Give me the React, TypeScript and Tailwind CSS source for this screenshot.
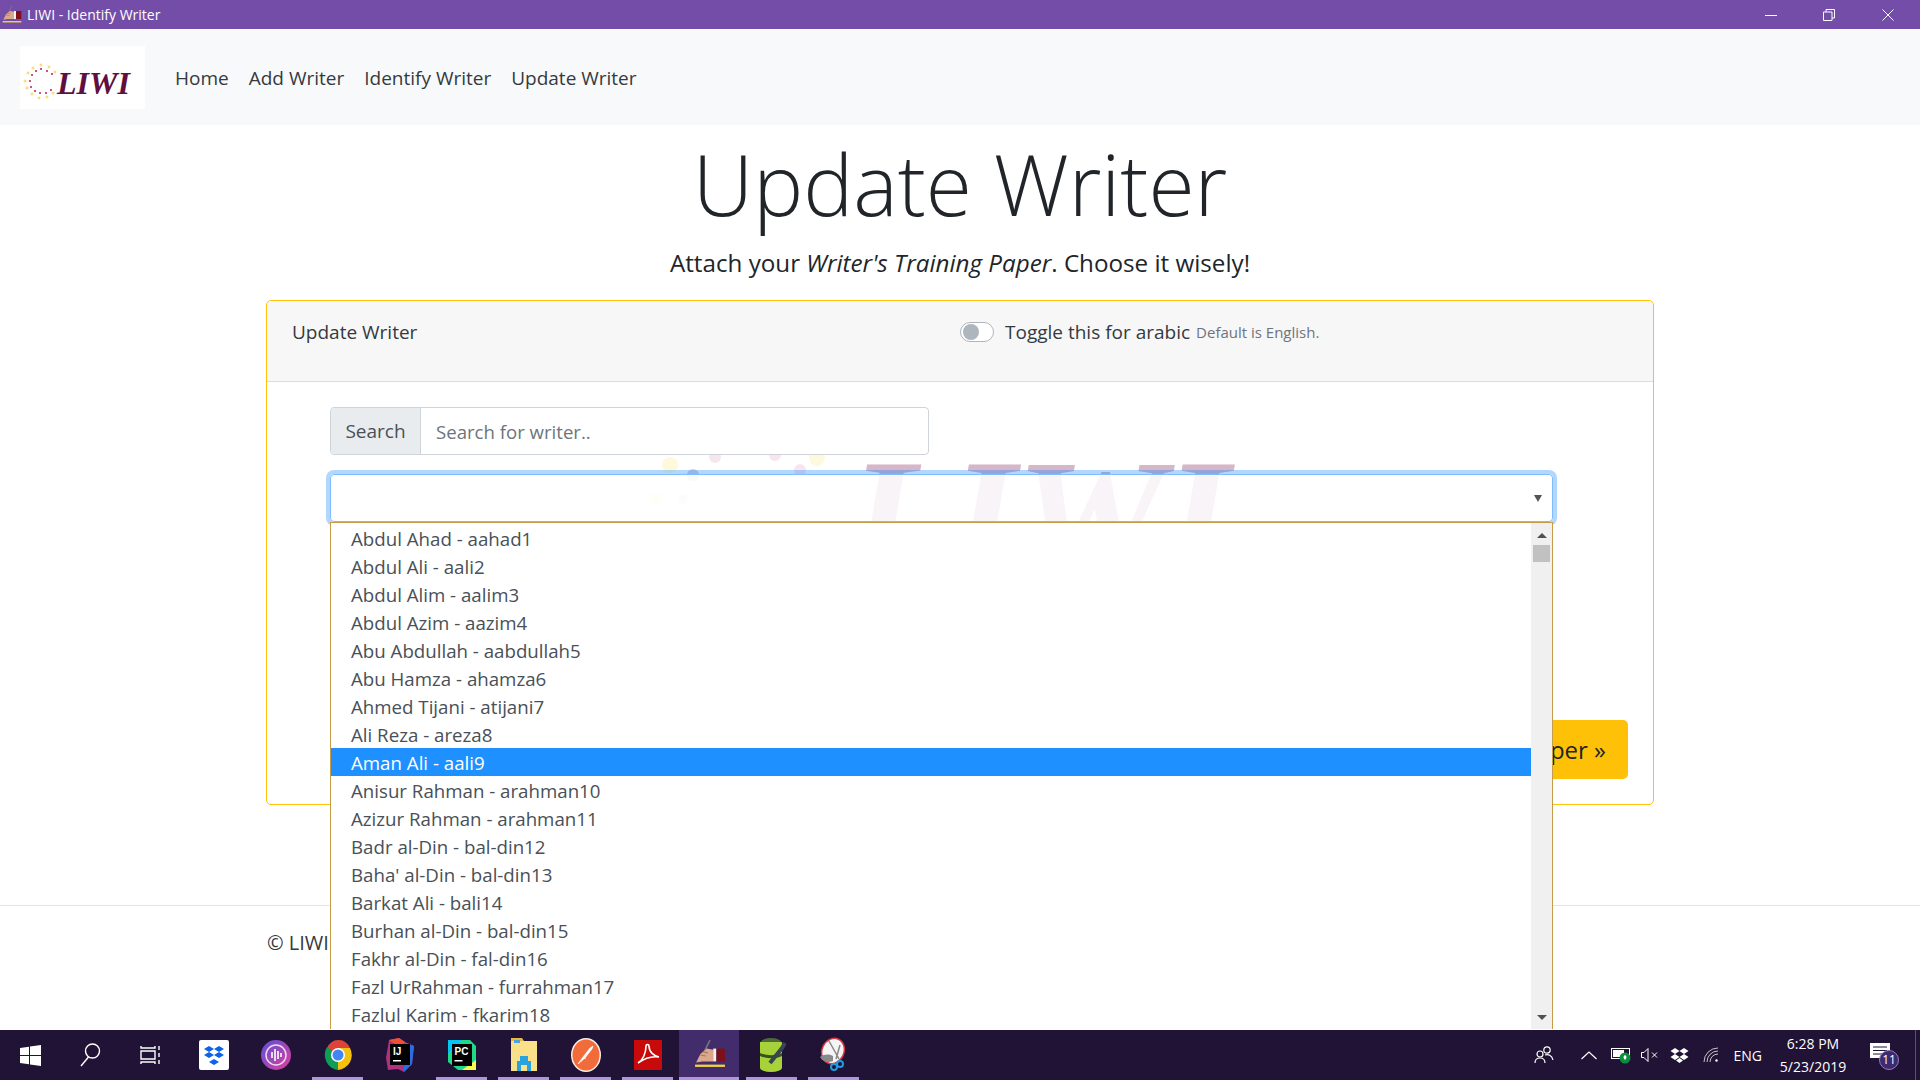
import React from 'react';

const writers = [
  'Abdul Ahad - aahad1',
  'Abdul Ali - aali2',
  'Abdul Alim - aalim3',
  'Abdul Azim - aazim4',
  'Abu Abdullah - aabdullah5',
  'Abu Hamza - ahamza6',
  'Ahmed Tijani - atijani7',
  'Ali Reza - areza8',
  'Aman Ali - aali9',
  'Anisur Rahman - arahman10',
  'Azizur Rahman - arahman11',
  'Badr al-Din - bal-din12',
  "Baha' al-Din - bal-din13",
  'Barkat Ali - bali14',
  'Burhan al-Din - bal-din15',
  'Fakhr al-Din - fal-din16',
  'Fazl UrRahman - furrahman17',
  'Fazlul Karim - fkarim18',
];

const yellowDots = [
  [13, 22], [21, 19], [29, 21], [35, 26], [8, 27], [5, 35], [7, 42], [12, 48], [19, 52], [27, 51], [33, 47],
];
const pinkDots = [
  [16, 25], [21, 23], [27, 25], [32, 28], [12, 29], [10, 35], [11, 41], [15, 45], [20, 47], [26, 47], [31, 44],
];

function Logo() {
  return (
    <svg width="125" height="63" viewBox="0 0 125 63" className="bg-white">
      {yellowDots.map(([x, y], i) => (
        <rect key={i} x={x - 1.3} y={y - 1.3} width="2.6" height="2.6" fill="#fbdc7c" />
      ))}
      {pinkDots.map(([x, y], i) => (
        <rect key={i} x={x - 1} y={y - 1} width="2" height="2" fill="#c9567f" />
      ))}
      <text
        x="37"
        y="48"
        textLength="73"
        lengthAdjust="spacingAndGlyphs"
        fontFamily="Liberation Serif, serif"
        fontStyle="italic"
        fontWeight="700"
        fontSize="31"
        fill="#5f0f40"
      >
        LIWI
      </text>
    </svg>
  );
}

function Watermark() {
  const dots = [
    [670, 465, 8, '#fef9dc'],
    [715, 457, 6, '#f7e6ef'],
    [775, 455, 6, '#f7e6ef'],
    [817, 458, 8, '#fef9dc'],
    [693, 475, 6, '#d9cfe6'],
    [800, 470, 6, '#f7e6ef'],
    [656, 498, 7, '#fdf9d8'],
    [683, 499, 5, '#f3e4ec'],
  ] as const;
  return (
    <svg width="640" height="210" viewBox="640 415 640 210" className="absolute left-[373px] top-[33px]">
      {dots.map(([x, y, r, c], i) => (
        <circle key={i} cx={x} cy={y} r={r} fill={c} />
      ))}
      <text
        x="849"
        y="577"
        textLength="381"
        lengthAdjust="spacingAndGlyphs"
        fontFamily="Liberation Serif, serif"
        fontStyle="italic"
        fontWeight="700"
        fontSize="172"
        fill="#d6b7c9"
      >
        LIWI
      </text>
    </svg>
  );
}

function AppIcon({ size }: { size: number }) {
  return (
    <svg width={size} height={size} viewBox="0 0 30 30">
      <path d="M15 1l-5 10" stroke="#777" strokeWidth="1.5" />
      <path d="M2 22l4-8 6-5 6 1v11H8z" fill="#dca88c" />
      <path d="M6 15l5 1M8 12l5 1" stroke="#a8755c" strokeWidth="1" />
      <rect x="18" y="9" width="3" height="12" fill="#f4f4f4" />
      <rect x="21" y="9" width="8" height="12" fill="#7d1019" />
      <rect x="1" y="24" width="28" height="2.2" fill="#f0cf45" />
    </svg>
  );
}

function TitleBar() {
  return (
    <div className="flex h-[29px] shrink-0 items-center bg-[#744da9] text-white">
      <div className="ml-[2px] mr-[5px]">
        <AppIcon size={20} />
      </div>
      <span className="text-[14px] leading-none">LIWI - Identify Writer</span>
      <div className="ml-auto flex items-center">
        <svg width="12" height="12" viewBox="0 0 12 12" className="mr-[46px]">
          <path d="M0 6.5h12" stroke="#fff" strokeWidth="1" />
        </svg>
        <svg width="12" height="12" viewBox="0 0 12 12" className="mr-[47px]">
          <path d="M.5 3h8.500v8.500H.5zM3 3V.5h8.500V9H9" fill="none" stroke="#fff" strokeWidth="1" />
        </svg>
        <svg width="12" height="12" viewBox="0 0 12 12" className="mr-[26px]">
          <path d="M.5.5l11 11M11.500.5l-11 11" stroke="#fff" strokeWidth="1" />
        </svg>
      </div>
    </div>
  );
}

function Navbar() {
  return (
    <nav className="flex h-[96px] shrink-0 items-center bg-[#f8f9fa] pl-[20px]">
      <Logo />
      <ul className="ml-[30px] flex gap-[20px] pt-[3px] text-[19px] text-[#343a40]">
        <li>Home</li>
        <li>Add Writer</li>
        <li>Identify Writer</li>
        <li>Update Writer</li>
      </ul>
    </nav>
  );
}

function WriterDropdown() {
  return (
    <div className="absolute left-0 top-full z-20 flex h-[507px] w-full border-x border-t border-[#c69c48] bg-white">
      <ul className="flex-1 pt-[1px] text-[18.7px] leading-[28px] text-[#495057]">
        {writers.map((w) => (
          <li key={w} className={`h-[28px] pl-[20px] pt-[1px] ${w === 'Aman Ali - aali9' ? 'bg-[#1e90ff] text-white' : ''}`}>
            {w}
          </li>
        ))}
      </ul>
      <div className="flex w-[21px] flex-col items-center bg-[#f0f0f0] pt-[10px]">
        <div className="h-0 w-0 border-x-[5px] border-b-[5px] border-x-transparent border-b-[#505050]" />
        <div className="mt-[7px] h-[17px] w-[17px] bg-[#c1c1c1]" />
        <div className="mb-[9px] mt-auto h-0 w-0 border-x-[5px] border-t-[5px] border-x-transparent border-t-[#505050]" />
      </div>
    </div>
  );
}

function WriterCard() {
  return (
    <div className="mx-auto w-[1388px] rounded-[5px] border border-[#ffc107]">
      <div className="flex h-[81px] items-start rounded-t-[5px] border-b border-[#dcdcdc] bg-[#f7f7f7] pl-[25px] pt-[17px] text-[19px] text-[#343a40]">
        <div className="w-[668px]">Update Writer</div>
        <div className="flex items-center">
          <div className="flex h-[20px] w-[34px] items-center rounded-full border border-[#adb5bd] bg-white pl-[2px]">
            <div className="h-[16px] w-[16px] rounded-full bg-[#adb5bd]" />
          </div>
          <span className="ml-[11px]">Toggle this for arabic</span>
          <span className="ml-[6px] text-[15px] text-[#6c757d]">Default is English.</span>
        </div>
      </div>
      <div className="relative pb-[25px] pl-[63px] pr-[25px] pt-[25px]">
        <Watermark />
        <div className="relative z-10 flex h-[48px] w-[599px] rounded-[4px] border border-[#ced4da] bg-white text-[19px]">
          <div className="flex w-[90px] items-center justify-center rounded-l-[4px] border-r border-[#ced4da] bg-[#e9ecef] pt-[1px] text-[#495057]">
            Search
          </div>
          <input
            placeholder="Search for writer.."
            className="min-w-0 flex-1 bg-transparent px-[15px] pt-[1px] text-[18.600px] text-[#495057] outline-none placeholder:text-[#6c757d]"
          />
        </div>
        <div className="relative z-10 mt-[19px] h-[48px] w-[1223px]">
          <div className="flex h-full items-center justify-end rounded-[4px] border border-[#80bdff] bg-white/85 pr-[10px] shadow-[0_0_0_4px_rgba(0,123,255,0.3)]">
            <div className="h-0 w-0 border-x-[4px] border-t-[7px] border-x-transparent border-t-[#50555a]" />
          </div>
          <WriterDropdown />
        </div>
        <div className="mt-[198px] flex justify-end">
          <button className="flex h-[59px] items-center rounded-[5px] bg-[#ffc107] pl-[24px] pr-[22px] pt-[1px] text-[24px] text-[#212529]">
            Update Paper »
          </button>
        </div>
      </div>
    </div>
  );
}

function TaskbarApp({ children, open, active }: { children: React.ReactNode; open?: boolean; active?: boolean }) {
  return (
    <div className="relative flex h-full w-[62px] items-center justify-center pl-[1px]">
      {active && <div className="absolute inset-y-0 left-[1px] right-[1px] bg-[#432c6b]" />}
      <div className="relative">{children}</div>
      {open && (
        <div className={`absolute bottom-0 h-[3px] bg-[#b094dc] ${active ? 'left-[1px] right-[1px]' : 'left-[6px] w-[51px]'}`} />
      )}
    </div>
  );
}

function Taskbar() {
  return (
    <footer className="flex h-[50px] shrink-0 items-center bg-[#201335] text-white">
      <div className="flex h-full w-[60px] items-center justify-center">
        <svg width="21" height="21" viewBox="0 0 21 21" fill="#fff">
          <path d="M0 3l9-1.300V10H0zM10 1.500L21 0v10H10zM0 11h9v8.300L0 18zM10 11h11v10l-11-1.500z" />
        </svg>
      </div>
      <div className="flex h-full w-[60px] items-center justify-center">
        <svg width="22" height="26" viewBox="0 0 22 26" fill="none" stroke="#fff" strokeWidth="1.400">
          <circle cx="13.500" cy="9" r="7" />
          <path d="M9.500 15L2 24" />
        </svg>
      </div>
      <div className="flex h-full w-[62px] items-center justify-center">
        <svg width="22" height="20" viewBox="0 0 22 20" fill="none" stroke="#fff" strokeWidth="1.400">
          <path d="M1 1v2h14V1M1 19v-2h14v2M1 6h14v8H1zM19 1v4M19 8v4M19 15v4" />
        </svg>
      </div>
      <TaskbarApp>
        <svg width="30" height="30" viewBox="0 0 30 30">
          <rect width="30" height="30" rx="2" fill="#fff" />
          <path d="M10 6l5 3-5 3-5-3zM20 6l5 3-5 3-5-3zM10 12l5 3-5 3-5-3zM20 12l5 3-5 3-5-3zM15 19l5 3-5 3-5-3z" fill="#0d62e8" />
        </svg>
      </TaskbarApp>
      <TaskbarApp>
        <svg width="30" height="30" viewBox="0 0 30 30">
          <defs>
            <linearGradient id="cort" x1="0" y1="0" x2="1" y2="1">
              <stop offset="0" stopColor="#5b4fd6" />
              <stop offset="1" stopColor="#e0409c" />
            </linearGradient>
          </defs>
          <circle cx="15" cy="15" r="15" fill="url(#cort)" />
          <circle cx="15" cy="15" r="10" fill="none" stroke="#fff" strokeWidth="1.500" opacity="0.8" />
          <path d="M11 12v6M14 9v12M17 11v8M20 13v4" stroke="#fff" strokeWidth="1.600" />
        </svg>
      </TaskbarApp>
      <TaskbarApp open>
        <svg width="30" height="30" viewBox="0 0 30 30">
          <path d="M15 15L4 8A13 15 0 0 1 15 0a13 15 0 0 1 12 8H15z" fill="#db4437" />
          <path d="M15 15L15 30A14 15 0 0 1 4 7z" fill="#0f9d58" />
          <path d="M15 8h12a15 15 0 0 1-12 22z" fill="#f4c20d" />
          <circle cx="15" cy="15" r="7" fill="#fff" />
          <circle cx="15" cy="15" r="5.500" fill="#4285f4" />
        </svg>
      </TaskbarApp>
      <TaskbarApp>
        <svg width="32" height="34" viewBox="0 0 32 34">
          <path d="M5 2l10-2 6 4 9 4-2 18-8 8-6-3-10 1L2 20z" fill="#b0317f" />
          <path d="M20 4l10 4-2 18-8 8z" fill="#2a6fe0" />
          <path d="M5 2l10-2 6 4-4 6z" fill="#f0502f" />
          <rect x="6" y="6" width="20" height="21" fill="#000" />
          <text x="9" y="17" fontFamily="Liberation Sans, sans-serif" fontWeight="700" fontSize="10" fill="#fff">
            IJ
          </text>
          <rect x="9" y="22" width="8" height="1.500" fill="#fff" />
        </svg>
      </TaskbarApp>
      <TaskbarApp open>
        <svg width="28" height="30" viewBox="0 0 28 30">
          <path d="M0 0h22l6 6v24H10L0 22z" fill="#21d789" />
          <path d="M14 30l14-10v10z" fill="#fcf84a" />
          <path d="M0 0h14L0 14z" fill="#07c3f2" />
          <rect x="4" y="4" width="20" height="22" fill="#000" />
          <text x="6.500" y="15" fontFamily="Liberation Sans, sans-serif" fontWeight="700" fontSize="10" fill="#fff">
            PC
          </text>
          <rect x="6.500" y="20" width="8" height="1.500" fill="#fff" />
        </svg>
      </TaskbarApp>
      <TaskbarApp open>
        <svg width="28" height="36" viewBox="0 0 28 36">
          <path d="M1 1h11l2 3H1z" fill="#e8b93c" />
          <rect x="1" y="4" width="26" height="30" fill="#fbe08a" />
          <rect x="4" y="3" width="6" height="3" fill="#4aa3e8" />
          <path d="M7 24h14v10h-4v-6h-6v6H7z" fill="#29a3e0" />
          <rect x="10" y="19" width="8" height="5" fill="#29a3e0" />
        </svg>
      </TaskbarApp>
      <TaskbarApp open>
        <svg width="30" height="34" viewBox="0 0 30 34">
          <ellipse cx="15" cy="17" rx="15" ry="17" fill="#f8f0e8" />
          <ellipse cx="15" cy="17" rx="13.500" ry="15.500" fill="#f26b3a" />
          <path d="M7 26l5-7 7-9 3-2-1 3-7 9zM12 19l3 2" fill="#fff" stroke="#fff" strokeWidth="0.600" />
        </svg>
      </TaskbarApp>
      <TaskbarApp open>
        <svg width="28" height="30" viewBox="0 0 28 30">
          <rect width="28" height="30" fill="#c80a0a" />
          <path d="M4 23c5-3 8-10 8-17 0-2 3-2 3 0 0 6 5 10 10 11-6-1-14 1-21 6z" fill="none" stroke="#fff" strokeWidth="1.600" />
        </svg>
      </TaskbarApp>
      <TaskbarApp open active>
        <AppIcon size={32} />
      </TaskbarApp>
      <TaskbarApp open>
        <svg width="28" height="36" viewBox="0 0 28 36">
          <ellipse cx="13" cy="5" rx="10" ry="4" fill="#4d6b3a" />
          <path d="M2 5h22v26a11 4 0 0 1-22 0z" fill="#a8d23a" />
          <path d="M2 16c6 3 16 3 22 0v3c-6 3-16 3-22 0z" fill="#35521f" />
          <path d="M27 6l-3 5-12 15" stroke="#37474f" strokeWidth="4" fill="none" />
        </svg>
      </TaskbarApp>
      <TaskbarApp open>
        <svg width="30" height="36" viewBox="0 0 30 36">
          <ellipse cx="14" cy="14" rx="11" ry="13" transform="rotate(25 14 14)" fill="#f5f5f5" stroke="#d8343f" strokeWidth="1.500" />
          <path d="M1 20c5-3 8-3 13-1v5c-5 2-10 1-13-4z" fill="#8a8a8a" />
          <path d="M10 4l10 18M21 8l-4 14" stroke="#888" strokeWidth="1.500" />
          <circle cx="21" cy="27" r="3" fill="none" stroke="#1e9be0" strokeWidth="2" />
          <circle cx="15" cy="30" r="3" fill="none" stroke="#1e9be0" strokeWidth="2" />
        </svg>
      </TaskbarApp>

      <div className="ml-auto flex h-full items-center">
        <svg width="20" height="20" viewBox="0 0 20 20" fill="none" stroke="#fff" strokeWidth="1.200">
          <circle cx="13" cy="5" r="3.200" />
          <circle cx="6" cy="9" r="3" />
          <path d="M1 18c0-3 2-5 5-5s5 2 5 5M11 10c3-1 7 0 8 5" />
        </svg>
        <svg width="16" height="9" viewBox="0 0 16 9" fill="none" stroke="#fff" strokeWidth="1.200" className="ml-[27px]">
          <path d="M.5 8L8 1l7.500 7" />
        </svg>
        <svg width="20" height="18" viewBox="0 0 20 18" className="ml-[14px]">
          <rect x="0.500" y="2.500" width="18" height="10" fill="none" stroke="#fff" />
          <rect x="2" y="4" width="11" height="7" fill="#fff" />
          <circle cx="14" cy="12" r="5.500" fill="#0a8f3c" />
          <path d="M14 9c2 1 2 3 0 5-2-2-2-4 0-5z" fill="#fff" />
        </svg>
        <svg width="18" height="14" viewBox="0 0 18 14" fill="none" stroke="#fff" strokeWidth="1" className="ml-[10px]">
          <path d="M.5 4.500h2.500l4-4v13l-4-4H.5zM11 4.500l5 5M16 4.500l-5 5" />
        </svg>
        <svg width="19" height="15" viewBox="0 0 19 15" fill="#fff" className="ml-[11px]">
          <path d="M5 0l4.500 3L5 6 .5 3zM14 0l4.500 3L14 6 9.500 3zM5 6l4.500 3L5 12 .5 9zM14 6l4.500 3L14 12 9.500 9zM9.500 10l3.500 2.500L9.500 15 6 12.500z" />
        </svg>
        <svg width="16" height="16" viewBox="0 0 16 16" fill="none" stroke="#fff" strokeWidth="1" className="ml-[14px]">
          <path d="M1 15A14 14 0 0 1 15 1M4 15A11 11 0 0 1 15 4M7 15a8 8 0 0 1 8-8" opacity="0.75" />
          <circle cx="13.500" cy="13.500" r="1.200" fill="#fff" stroke="none" />
        </svg>
        <span className="ml-[15px] text-[14px]">ENG</span>
        <div className="ml-[13px] w-[76px] text-center text-[14px] leading-[23px]">
          <div>6:28 PM</div>
          <div>5/23/2019</div>
        </div>
        <div className="relative ml-[19px] mr-[25px] h-[30px] w-[20px]">
          <svg width="20" height="18" viewBox="0 0 20 18" className="absolute left-0 top-[3px]">
            <path d="M0 0h20v15H0z" fill="#fff" />
            <path d="M3 4h14M3 7.500h14M3 11h10" stroke="#201335" strokeWidth="1" />
          </svg>
          <div className="absolute left-[9px] top-[10px] flex h-[20px] w-[20px] items-center justify-center rounded-full border border-[#8f7fb8] bg-[#3d2a70] text-[12px] leading-none">
            11
          </div>
        </div>
        <div className="h-full w-[1px] bg-[#5a5070]" />
        <div className="w-[4px]" />
      </div>
    </footer>
  );
}

export default function App() {
  return (
    <div className="flex h-screen w-full flex-col overflow-hidden bg-white font-['Open_Sans',sans-serif] text-[#212529]">
      <TitleBar />
      <main className="min-h-0 flex-1 overflow-hidden">
        <Navbar />
        <div className="flex h-[175px] flex-col items-center">
          <h1 className="text-[84px] font-light leading-[118px]">Update Writer</h1>
          <p className="text-[24.200px] leading-[40px]">
            Attach your <em>Writer's Training Paper</em>. Choose it wisely!
          </p>
        </div>
        <WriterCard />
        <div className="mt-[100px] border-t border-[#e5e5e5] pt-[24px]">
          <div className="mx-auto w-[1388px] pl-[1px] text-[20px] leading-[26px] text-[#343a40]">© LIWI</div>
        </div>
      </main>
      <Taskbar />
    </div>
  );
}
